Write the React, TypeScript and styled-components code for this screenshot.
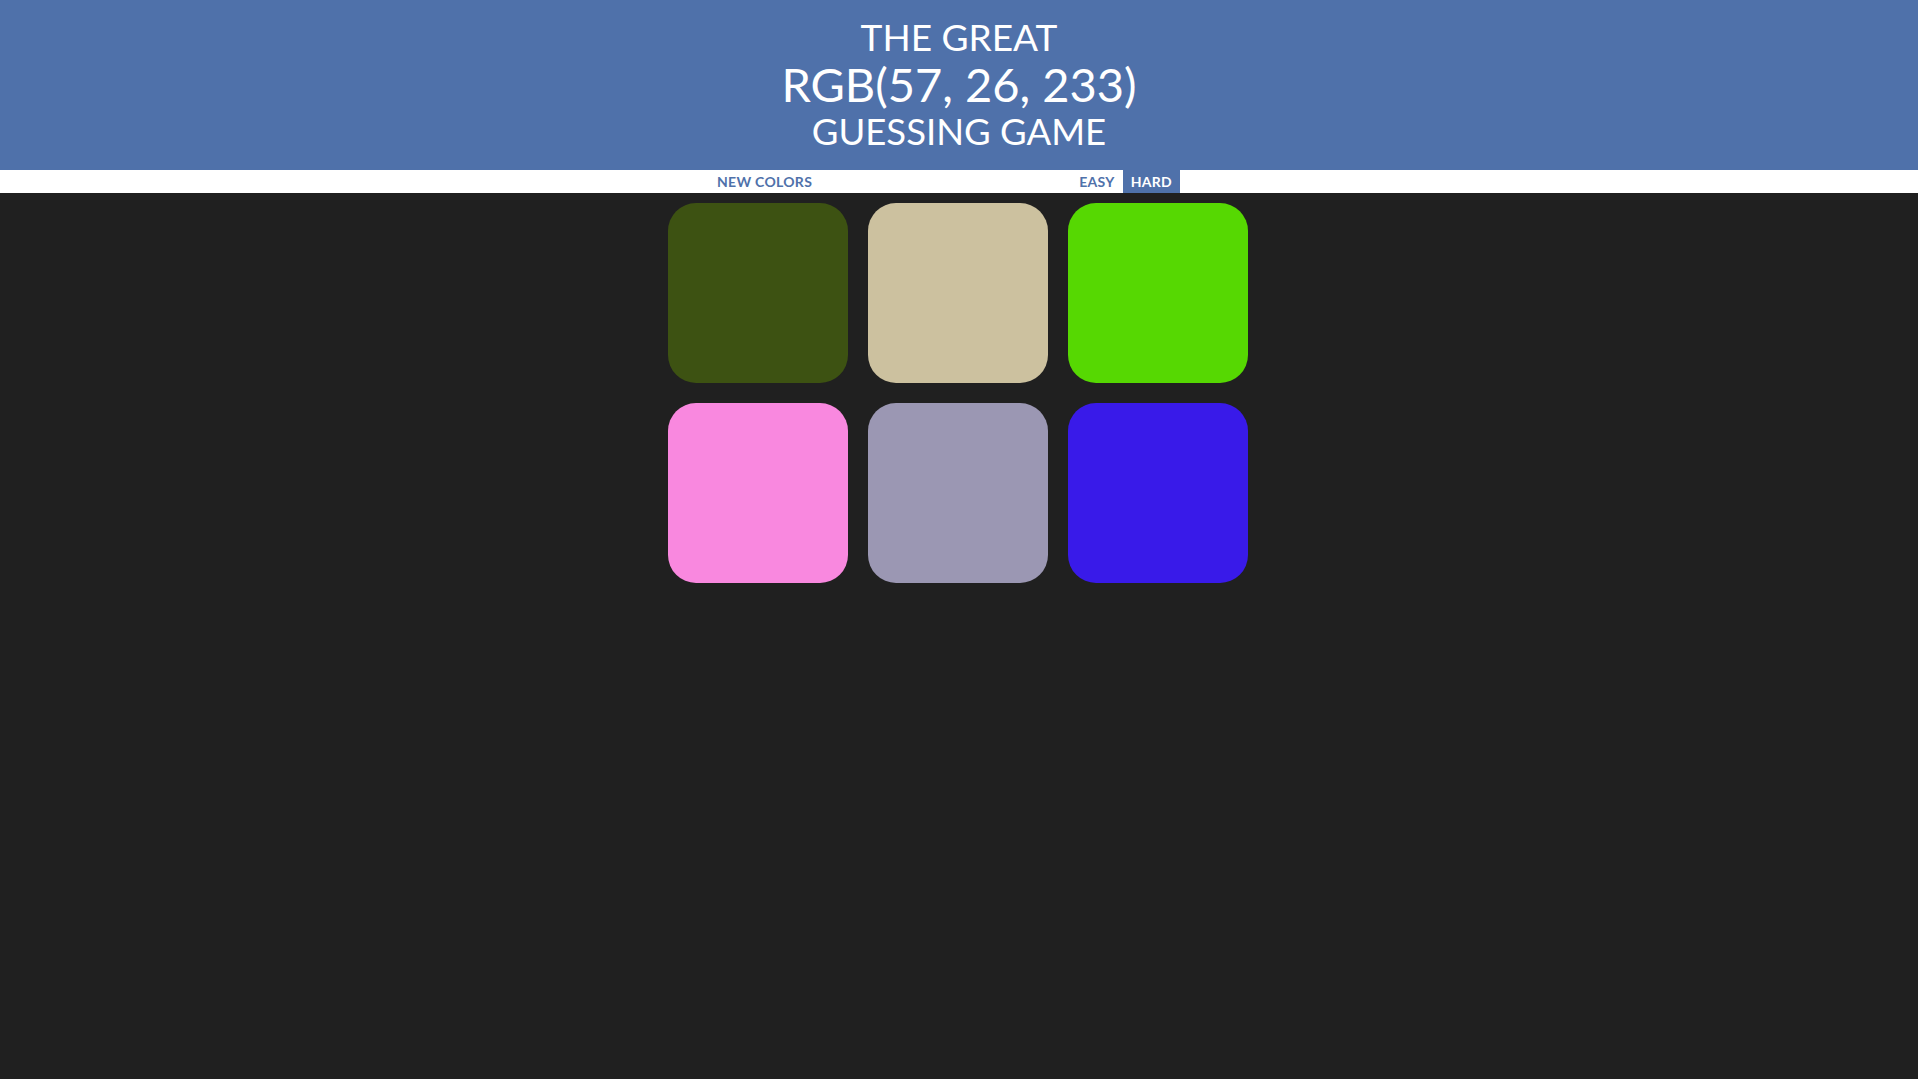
import styled, { createGlobalStyle } from 'styled-components';

const GlobalStyle = createGlobalStyle`
  body {
    margin: 0;
    background: #202020;
    font-family: Lato, "Open Sans", sans-serif;
  }
`;

const Header = styled.h1`
  margin: 0;
  height: 170px;
  box-sizing: border-box;
  padding-top: 13px;
  background: #4f71aa;
  color: white;
  text-align: center;
  text-transform: uppercase;
  font-weight: 400;
`;

const Line = styled.span<{ $size: number; $height: number }>`
  display: block;
  font-size: ${(p) => p.$size}px;
  line-height: ${(p) => p.$height}px;
`;

const Stripe = styled.div`
  height: 23px;
  background: white;
  display: flex;
  justify-content: center;
`;

const Nav = styled.div`
  width: 600px;
  box-sizing: border-box;
  padding: 0 79px 0 50px;
  display: flex;
  align-items: stretch;
`;

const Spacer = styled.span`
  flex: 1;
`;

const NavButton = styled.button<{ $selected?: boolean }>`
  border: none;
  margin: 0;
  padding: 0 8px;
  font-family: Lato, "Open Sans", sans-serif;
  font-size: 14px;
  font-weight: 700;
  text-transform: uppercase;
  letter-spacing: 0.3px;
  cursor: pointer;
  background: ${(p) => (p.$selected ? '#4f71aa' : 'white')};
  color: ${(p) => (p.$selected ? 'white' : '#4f71aa')};
  outline: none;
`;

const Board = styled.div`
  width: 580px;
  margin: 10px auto 0;
  padding-right: 2px;
  display: grid;
  grid-template-columns: repeat(3, 180px);
  gap: 20px;
`;

const Square = styled.div<{ $color: string }>`
  width: 180px;
  height: 180px;
  border-radius: 28px;
  background: ${(p) => p.$color};
`;

const colors = [
  'rgb(61, 82, 18)',
  'rgb(204, 193, 159)',
  'rgb(86, 216, 2)',
  'rgb(249, 136, 223)',
  'rgb(155, 151, 179)',
  'rgb(57, 26, 233)',
];

const App = () => {
  return (
    <>
      <GlobalStyle />
      <Header>
        <Line $size={37} $height={47}>The Great</Line>
        <Line $size={47} $height={48}>RGB(57, 26, 233)</Line>
        <Line $size={36.5} $height={46}>Guessing Game</Line>
      </Header>
      <Stripe>
        <Nav>
          <NavButton>New Colors</NavButton>
          <Spacer />
          <NavButton>Easy</NavButton>
          <NavButton $selected>Hard</NavButton>
        </Nav>
      </Stripe>
      <Board>
        {colors.map((c) => (
          <Square key={c} $color={c} />
        ))}
      </Board>
    </>
  );
};

export default App;
